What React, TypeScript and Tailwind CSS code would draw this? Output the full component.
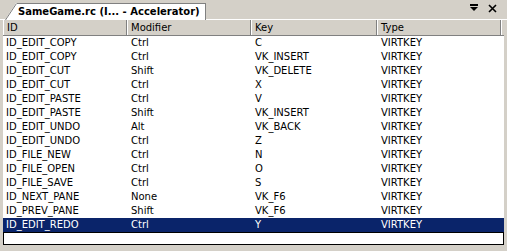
import React from "react";

type Row = { id: string; mod: string; key: string; type: string };

const rows: Row[] = [
  { id: "ID_EDIT_COPY", mod: "Ctrl", key: "C", type: "VIRTKEY" },
  { id: "ID_EDIT_COPY", mod: "Ctrl", key: "VK_INSERT", type: "VIRTKEY" },
  { id: "ID_EDIT_CUT", mod: "Shift", key: "VK_DELETE", type: "VIRTKEY" },
  { id: "ID_EDIT_CUT", mod: "Ctrl", key: "X", type: "VIRTKEY" },
  { id: "ID_EDIT_PASTE", mod: "Ctrl", key: "V", type: "VIRTKEY" },
  { id: "ID_EDIT_PASTE", mod: "Shift", key: "VK_INSERT", type: "VIRTKEY" },
  { id: "ID_EDIT_UNDO", mod: "Alt", key: "VK_BACK", type: "VIRTKEY" },
  { id: "ID_EDIT_UNDO", mod: "Ctrl", key: "Z", type: "VIRTKEY" },
  { id: "ID_FILE_NEW", mod: "Ctrl", key: "N", type: "VIRTKEY" },
  { id: "ID_FILE_OPEN", mod: "Ctrl", key: "O", type: "VIRTKEY" },
  { id: "ID_FILE_SAVE", mod: "Ctrl", key: "S", type: "VIRTKEY" },
  { id: "ID_NEXT_PANE", mod: "None", key: "VK_F6", type: "VIRTKEY" },
  { id: "ID_PREV_PANE", mod: "Shift", key: "VK_F6", type: "VIRTKEY" },
  { id: "ID_EDIT_REDO", mod: "Ctrl", key: "Y", type: "VIRTKEY" },
];

function HeaderCell({ label, w }: { label: string; w: string }) {
  return (
    <div className={`${w} h-full border-l border-white border-r border-r-[#808080] pl-[3px] leading-[15px]`}>
      {label}
    </div>
  );
}

export default function App() {
  return (
    <div className="w-[507px] h-[251px] bg-[#d4d0c8] flex flex-col font-['DejaVu_Sans',sans-serif] text-[10px] text-black overflow-hidden">
      {/* tab strip */}
      <div className="h-[20px] flex items-end pl-[5px] pr-[10px] border-b border-white">
        <div className="flex items-end h-[17px] -mb-px">
          <svg width="12" height="17" viewBox="0 0 12 17" className="block">
            <polygon points="0,17 11,0 12,0 12,17" fill="#ffffff" />
            <line x1="0.5" y1="17" x2="11.5" y2="0.5" stroke="#808080" strokeWidth="1" />
          </svg>
          <div className="h-[17px] bg-white border-t border-r border-[#808080] pl-px pr-[5px] font-bold text-[10px] leading-[16px] whitespace-nowrap">
            SameGame.rc (I... - Accelerator)
          </div>
        </div>
        <div className="flex-1" />
        <div className="flex items-center gap-[10px] h-[20px] pb-[2px]">
          <svg width="8" height="8" viewBox="0 0 8 8" className="block">
            <rect x="0" y="0" width="8" height="2" fill="#000" />
            <polygon points="0,3 8,3 4,7" fill="#000" />
          </svg>
          <svg width="9" height="9" viewBox="0 0 9 9" className="block">
            <path d="M1 1 L8 8 M8 1 L1 8" stroke="#000" strokeWidth="1.6" />
          </svg>
        </div>
      </div>

      {/* list */}
      <div className="flex-1 flex flex-col pl-[3px] pr-[3px] pb-[6px]">
        <div className="h-[16px] flex border-b border-[#808080]">
          <HeaderCell label="ID" w="w-[124px]" />
          <HeaderCell label="Modifier" w="w-[124px]" />
          <HeaderCell label="Key" w="w-[126px]" />
          <HeaderCell label="Type" w="w-[124px]" />
          <div className="flex-1 border-l border-white" />
        </div>
        <div className="bg-white flex flex-col">
          {rows.map((r, i) => {
            const sel = i === rows.length - 1;
            return (
              <div
                key={i}
                className={`h-[14px] flex leading-[14px] whitespace-nowrap ${sel ? "bg-[#0a246a] text-white" : ""}`}
              >
                <div className="w-[124px] pl-[3px]">{r.id}</div>
                <div className="w-[124px] pl-[4px]">{r.mod}</div>
                <div className="w-[126px] pl-[4px]">{r.key}</div>
                <div className="w-[124px] pl-[4px]">{r.type}</div>
              </div>
            );
          })}
          <div className="h-[13px] border border-black" />
        </div>
      </div>
    </div>
  );
}
